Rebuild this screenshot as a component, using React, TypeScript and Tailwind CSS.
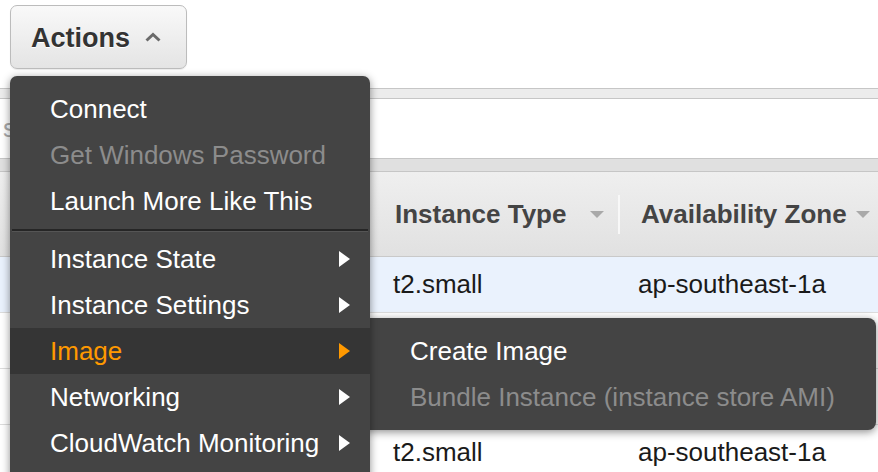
import React from "react";

const font = { fontFamily: '"Liberation Sans", Arial, Helvetica, sans-serif' };

function Arrow({ orange }: { orange?: boolean }) {
  return (
    <svg width="11" height="16" viewBox="0 0 11 16" className="shrink-0">
      <polygon points="0,0 11,8 0,16" fill={orange ? "#ff9900" : "#ffffff"} />
    </svg>
  );
}

function Caret() {
  return (
    <svg width="14" height="8" viewBox="0 0 14 8" className="shrink-0">
      <polygon points="0,0 14,0 7,7" fill="#a9a9a9" />
    </svg>
  );
}

function MenuItem({
  label,
  disabled,
  active,
  sub,
}: {
  label: string;
  disabled?: boolean;
  active?: boolean;
  sub?: boolean;
}) {
  return (
    <div
      className={`h-[46px] flex items-center justify-between pl-[40px] pr-[20px] text-[26px] ${
        active ? "bg-[#353535] text-[#ff9900]" : disabled ? "text-[#8c8c8c]" : "text-white"
      }`}
    >
      <span className="whitespace-nowrap">{label}</span>
      {sub && <Arrow orange={active} />}
    </div>
  );
}

export default function App() {
  // rows 2 and 3 sit under the submenu, so only 1 and 4 show text
  const rows = [true, false, false, true];

  return (
    <div className="relative w-[878px] h-[472px] overflow-hidden bg-white" style={font}>
      {/* top toolbar */}
      <div className="h-[88px] pt-[5px] pl-[10px]">
        <button className="h-[64px] w-[177px] rounded-[7px] border border-[#bcbcbc] bg-gradient-to-b from-[#f9f9f9] to-[#e4e4e4] shadow-[0_1px_1px_rgba(0,0,0,0.08)] flex items-center pl-[20px] pt-[3px] gap-[15px]">
          <span className="text-[27px] font-bold text-[#333] [text-shadow:0_1px_0_#fff]">Actions</span>
          <svg width="16" height="10" viewBox="0 0 16 10" className="mt-[-4px]">
            <polyline points="1.5,8.5 8,2.5 14.5,8.5" fill="none" stroke="#6a6a6a" strokeWidth="3" />
          </svg>
        </button>
      </div>

      <div className="h-[11px] border-y border-[#c6c6c6] bg-[#ececec]" />

      {/* search row */}
      <div className="h-[59px] flex items-center pl-[3px] text-[26px] text-[#a8a8a8]">
        search
      </div>

      <div className="h-[14px] border-y border-[#c6c6c6] bg-[#e0e0e0]" />

      {/* table header */}
      <div className="h-[85px] grid grid-cols-[378px_242px_1fr] bg-gradient-to-b from-[#efefef] to-[#e1e1e1] border-b border-[#c9c9c9] text-[26px] font-bold text-[#444] pb-[3px]">
        <div />
        <div className="flex items-center justify-between pl-[17px] pr-[14px] border-r-2 border-[#f8f8f8] my-[23px]">
          <span>Instance Type</span>
          <Caret />
        </div>
        <div className="flex items-center justify-between pl-[21px] pr-[8px]">
          <span className="whitespace-nowrap">Availability Zone</span>
          <Caret />
        </div>
      </div>

      {/* rows */}
      {rows.map((show, i) => (
        <div
          key={i}
          className={`h-[56px] grid grid-cols-[378px_242px_1fr] items-center border-b border-[#dcdcdc] text-[26px] text-[#1a1a1a] ${
            i === 0 ? "bg-[#eaf2fd]" : "bg-white"
          }`}
        >
          <div />
          <div className="pl-[15px]">{show ? "t2.small" : ""}</div>
          <div className="pl-[18px] whitespace-nowrap">{show ? "ap-southeast-1a" : ""}</div>
        </div>
      ))}

      {/* submenu */}
      <div className="absolute left-[362px] top-[318px] w-[514px] h-[112px] rounded-[8px] bg-[#444] shadow-[0_2px_8px_rgba(0,0,0,0.45)] py-[10px] pl-[8px] z-10">
        <MenuItem label="Create Image" />
        <MenuItem label="Bundle Instance (instance store AMI)" disabled />
      </div>

      {/* main dropdown */}
      <div className="absolute left-[10px] top-[76px] w-[360px] h-[420px] rounded-[7px] bg-[#444] shadow-[0_2px_8px_rgba(0,0,0,0.45)] pt-[10px] z-20">
        <MenuItem label="Connect" />
        <MenuItem label="Get Windows Password" disabled />
        <MenuItem label="Launch More Like This" />
        <div className="h-[12px] flex items-center px-[2px]">
          <div className="w-full h-[3px] bg-[#262626] border-b border-[#555]" />
        </div>
        <MenuItem label="Instance State" sub />
        <MenuItem label="Instance Settings" sub />
        <MenuItem label="Image" sub active />
        <MenuItem label="Networking" sub />
        <MenuItem label="CloudWatch Monitoring" sub />
      </div>
    </div>
  );
}
